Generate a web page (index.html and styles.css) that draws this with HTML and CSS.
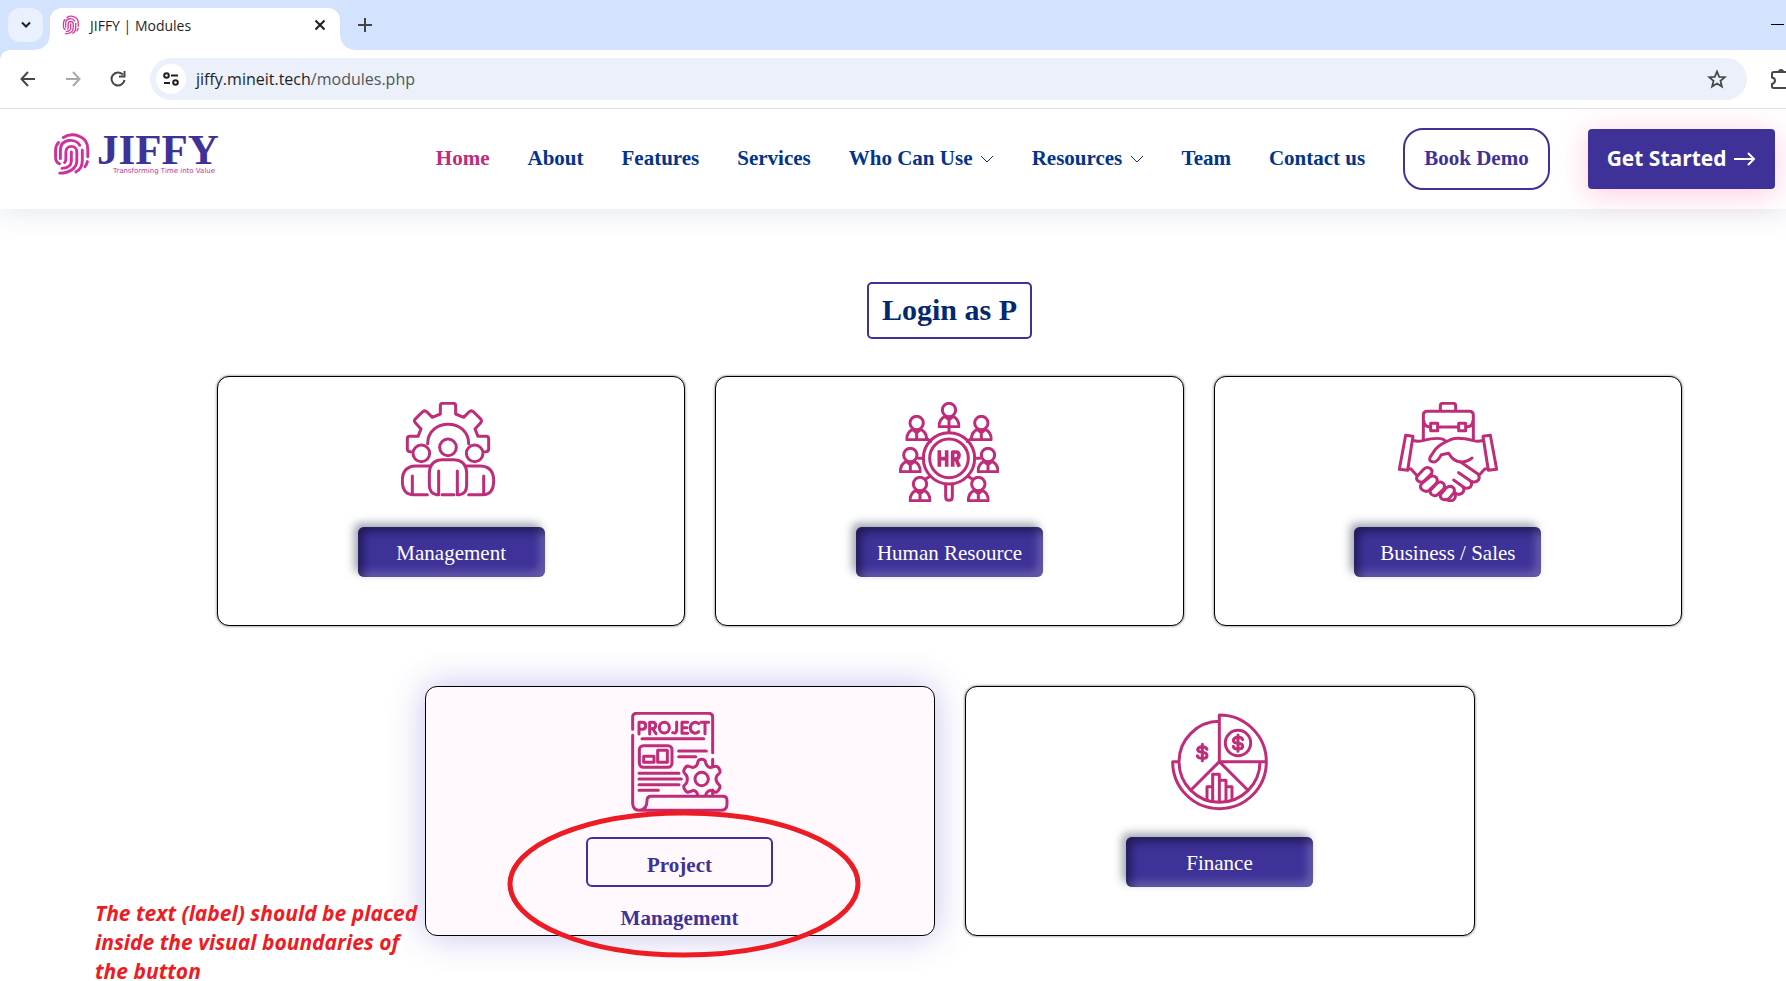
FILE: index.html
```html
<!DOCTYPE html>
<html lang="en">
<head>
<meta charset="utf-8">
<title>JIFFY | Modules</title>
<link rel="stylesheet" href="styles.css">
</head>
<body>
<svg class="defs" aria-hidden="true">
  <symbol id="finger" viewBox="158 394 118 135">
    <g fill="none" stroke="currentColor" stroke-width="9" stroke-linecap="round">
      <path d="M175 426Q166 436 166 450V472Q166 486 178 492"/>
      <path d="M190 410C218 393 266 404 266 446V470"/>
      <path d="M181 476V450C181 412 228 412 241 434"/>
      <path d="M249 450V482Q249 508 229 517"/>
      <path d="M194 488Q198 484 198 476V455C198 432 232 432 232 455V482C232 506 210 521 179 521"/>
      <path d="M215 455V484Q214 504 186 506"/>
      <path d="M265 485Q262 496 257 501"/>
    </g>
  </symbol>
  <symbol id="chev" viewBox="0 0 14 8"><path d="M1 1l6 6 6-6" fill="none" stroke="currentColor" stroke-width="1"/></symbol>
  <symbol id="worker" viewBox="0 0 68 78">
    <g fill="none" stroke="currentColor" stroke-width="9"><circle cx="34" cy="24" r="20"/><path d="M4 74H64C64 56 55 47 45 43M4 74C4 56 13 47 23 43M34 44V74M24 45L34 54 44 45"/></g>
  </symbol>
</svg>
<div class="window">
  <div class="tabstrip">
    <button class="tabsearch" aria-label="Search tabs"><svg width="12" height="8" viewBox="0 0 12 8"><path d="M2 1.500l4 4 4-4" fill="none" stroke="#1f1f1f" stroke-width="2"/></svg></button>
    <div class="tab">
      <svg class="favicon" width="18" height="20"><use href="#finger"/></svg>
      <span class="tabtitle">JIFFY | Modules</span>
      <button class="plain" aria-label="Close tab"><svg width="12" height="12" viewBox="0 0 12 12"><path d="M1.500 1.500l9 9M10.500 1.500l-9 9" stroke="#1f1f1f" stroke-width="2"/></svg></button>
    </div>
    <button class="plain newtab" aria-label="New tab"><svg width="14" height="14" viewBox="0 0 14 14"><path d="M7 0v14M0 7h14" stroke="#444" stroke-width="2"/></svg></button>
    <button class="plain minimise" aria-label="Minimise"><svg width="13" height="2" viewBox="0 0 13 2"><path d="M0 .5h13" stroke="#000"/></svg></button>
  </div>
  <div class="toolbar">
    <button class="plain" aria-label="Back"><svg width="16" height="16" viewBox="0 0 16 16"><path d="M15 8H2M8 1L1.500 8 8 15" fill="none" stroke="#474747" stroke-width="2"/></svg></button>
    <button class="plain" aria-label="Forward"><svg width="16" height="16" viewBox="0 0 16 16"><path d="M1 8h13M8 1l6.500 7L8 15" fill="none" stroke="#a9a9a9" stroke-width="2"/></svg></button>
    <button class="plain" aria-label="Reload"><svg width="16" height="16" viewBox="0 0 16 16"><path d="M14.500 9A6.500 6.500 0 1 1 13 3.700" fill="none" stroke="#474747" stroke-width="2"/><path d="M15.500 0v6.500H9V4.500h4.500V0z" fill="#474747"/></svg></button>
    <div class="omnibox">
      <button class="site" aria-label="Site information"><svg width="16" height="14" viewBox="0 0 16 14" fill="none" stroke="#1f1f1f" stroke-width="2"><circle cx="3.500" cy="3.500" r="2.300"/><path d="M8 3.500h7M1 11h6"/><circle cx="12.500" cy="10.500" r="2.300"/></svg></button>
      <div class="url">jiffy.mineit.tech<span>/modules.php</span></div>
      <button class="plain" aria-label="Bookmark"><svg width="20" height="20" viewBox="0 0 20 20"><path d="M10 2.500l2.200 5.300 5.700.4-4.400 3.700 1.400 5.600L10 14.500l-4.900 3 1.400-5.600L2.100 8.200l5.700-.4z" fill="none" stroke="#474747" stroke-width="1.800"/></svg></button>
    </div>
    <button class="plain ext" aria-label="Extensions"><svg width="15" height="22" viewBox="0 0 15 22"><path d="M15 4H3Q1 4 1 6V9.500Q4 10 4 12.500T1 16V18.500Q1 20 3 20H15" fill="none" stroke="#474747" stroke-width="2"/><path d="M7 4Q7 1 10 1T13 4z" fill="#474747"/></svg></button>
  </div>
  <div class="page">
    <header class="header">
      <a class="logo" href="#">
        <svg width="38" height="44"><use href="#finger"/></svg>
        <span class="wordmark"><span class="name">JIFFY</span><span class="tagline">Transforming Time into Value</span></span>
      </a>
      <nav class="nav">
        <a class="active" href="#">Home</a>
        <a href="#">About</a>
        <a href="#">Features</a>
        <a href="#">Services</a>
        <a href="#">Who Can Use <svg width="14" height="8"><use href="#chev"/></svg></a>
        <a href="#">Resources <svg width="14" height="8"><use href="#chev"/></svg></a>
        <a href="#">Team</a>
        <a href="#">Contact us</a>
        <a class="demo" href="#">Book Demo</a>
        <a class="start" href="#">Get Started <svg width="22" height="14" viewBox="0 0 22 14"><path d="M0 7h20M14 1l6 6-6 6" fill="none" stroke="#fff" stroke-width="2"/></svg></a>
      </nav>
    </header>
    <main class="modules">
      <h1 class="title">Login as P</h1>
      <div class="row three">
        <section class="card">
          <svg class="icon" viewBox="183 96 300 300">
            <path d="M212 245Q202 245 202 236V206Q202 199 210 199H234L243 177 226 158Q221 152 227 146L247 126Q254 119 261 126L277 142 301 132V108Q301 100 309 100H339Q347 100 347 108V132L371 142 387 126Q394 119 401 126L421 146Q427 152 422 158L405 177 414 199H438Q446 199 446 206V236Q446 245 436 245"/>
            <path d="M263 221C263 143 386 143 386 221"/>
            <circle cx="324" cy="232" r="25"/><circle cx="244" cy="250" r="25"/><circle cx="404" cy="250" r="25"/>
            <path d="M295 374H290Q268 370 268 346V308Q270 270 308 269H340Q378 270 380 308V346Q380 372 358 374H353M296 303V374M352 303V374M306 374H342"/>
            <path d="M270 288H226Q187 290 187 332 187 374 220 374H262M378 288H422Q461 290 461 332 461 374 428 374H386M217 318V370M431 318V370"/>
          </svg>
          <a class="btn" href="#">Management</a>
        </section>
        <section class="card">
          <svg class="icon" viewBox="178 96 300 300">
            <use href="#worker" x="294" y="96" width="68" height="78"/>
            <use href="#worker" x="197" y="135" width="68" height="78"/><use href="#worker" x="391" y="135" width="68" height="78"/>
            <use href="#worker" x="178" y="231" width="68" height="78"/><use href="#worker" x="411" y="231" width="68" height="78"/>
            <use href="#worker" x="207" y="318" width="68" height="78"/><use href="#worker" x="382" y="318" width="68" height="78"/>
            <g stroke-width="9"><circle cx="328" cy="265" r="77"/><circle cx="328" cy="265" r="58"/><path d="M328 174V188M262 206L273 215M394 206L383 215M236 265H251M405 265H420M257 328L272 318M399 328L384 318M318 342V380Q318 391 328 391T338 380V342"/></g>
            <path stroke-width="11" stroke-linecap="butt" d="M299 241V290M321 241V290M299 266H321M339 290V246H349Q358 246 358 256T349 267H339M349 267L359 290"/>
          </svg>
          <a class="btn" href="#">Human Resource</a>
        </section>
        <section class="card">
          <svg class="icon" viewBox="204 96 300 300">
            <path d="M331 122V108Q331 100 339 100H369Q377 100 377 108V122M280 208V136Q280 124 292 124H418Q430 124 430 136V208M281 150Q281 170 300 171M324 171H386M429 150Q429 170 410 171"/>
            <rect x="302" y="160" width="21" height="22"/><rect x="386" y="160" width="21" height="22"/>
            <path d="M227 196L249 199 233 301 208 298ZM481 196L459 199 475 301 500 298Z"/>
            <path d="M249 211Q262 216 278 212 334 198 346 213M459 211Q446 216 430 212 384 200 364 208 330 222 318 236 312 244 300 262 296 275 310 276 322 277 334 254L356 250Q370 275 392 276 408 277 426 264"/>
            <path d="M235 296L243 297 262 318M474 296L464 297 446 317M392 276L444 312Q450 320 446 329 436 341 422 333L386 308M422 334Q428 342 421 351 410 359 399 350L371 330M399 351Q406 360 396 370 385 377 374 368M375 372Q379 384 370 390 360 395 348 388"/>
            <path d="M262 318L281 298Q291 288 302 296 310 304 303 313L281 334Q272 340 263 332 257 325 262 318ZM275 341L298 322Q310 314 319 323 325 332 318 341L297 361Q288 368 276 359 267 350 275 341ZM303 359L320 341Q332 331 341 341 346 349 340 358L323 374Q313 381 303 372 298 365 303 359ZM333 372L348 354Q362 344 371 354 376 362 370 370L357 386Q345 393 335 386 328 379 333 372Z"/>
          </svg>
          <a class="btn" href="#">Business / Sales</a>
        </section>
      </div>
      <div class="row two">
        <section class="card hover">
          <svg class="icon" viewBox="211 96 300 300">
            <path d="M219 148V112Q219 100 231 100H447Q459 100 459 112V218M219 166V370Q220 391 240 391 262 388 262 362 262 349 274 349H490Q502 349 502 362V374Q501 391 484 391H240M459 238V260M459 330V346"/>
            <path d="M247 176H432M357 213H440M357 230H408M238 280H358M238 297H365M238 314H358M238 331H296"/>
            <rect x="239" y="197" width="98" height="65" rx="12"/><rect x="252" y="229" width="31" height="18"/><rect x="294" y="211" width="29" height="36"/>
            <circle cx="426" cy="297" r="20"/>
            <path d="M414 346Q413 334 402 331L387 336Q380 338 375 328 369 319 376 314 383 308 383 297T376 281Q369 275 375 266 380 256 388 259L400 263Q413 259 414 248 415 238 426 238T438 248Q440 259 452 263L466 259Q474 257 479 267 484 276 478 281 469 288 469 297T478 314Q484 319 478 328 473 338 465 336L452 331Q440 334 438 346"/>
            <path d="M238 162V127H248Q258 127 258 137T248 148H238M270 162V127H279Q288 127 288 136T279 146H270M279 146L289 161M351 126V151Q351 161 339 158M384 127H367V160H384M367 143H382M417 131Q410 125 402 128 392 132 392 144T403 159Q411 161 417 155M424 127H447M436 127V161"/><ellipse cx="314" cy="143" rx="15" ry="16"/>
          </svg>
          <a class="btn" href="#">Project Management</a>
          <svg class="ring" viewBox="0 0 356 150"><ellipse cx="178" cy="75" rx="174" ry="71" fill="none" stroke="#ed1c24" stroke-width="5"/></svg>
        </section>
        <section class="card">
          <svg class="icon" viewBox="209 66 300 300">
            <path d="M357 94C290 94 236 150 236 215 236 282 290 337 357 337 425 337 479 282 479 215M357 215V75C435 75 498 138 498 215 498 294 435 356 357 356 280 356 217 294 217 215H236M357 215H498M357 215L272 300M357 215L442 300"/>
            <path d="M320 331V290H337M337 334V253H357V334M357 271H377V334M377 290H395V328"/>
            <circle cx="413" cy="159" r="38"/>
            <path d="M427 149Q425 142 413 142T399 150Q399 159 413 160T427 169Q427 177 413 177T399 169M413 135V184M320 178Q318 170 306 170T292 178Q292 186 306 187T320 197Q320 205 306 205T291 197M306 163V212"/>
          </svg>
          <a class="btn" href="#">Finance</a>
        </section>
        <p class="note">The text (label) should be placed inside the visual boundaries of the button</p>
      </div>
    </main>
  </div>
</div>
</body>
</html>
```
FILE: styles.css
```css
* { box-sizing: border-box; }
body { margin: 0; background: #fff; font-family: "Liberation Serif", serif; }
button { font: inherit; color: inherit; cursor: pointer; }
a { text-decoration: none; color: inherit; }
.defs { position: absolute; width: 0; height: 0; }
.window { height: 100vh; display: flex; flex-direction: column; overflow: hidden; background: #d3e2fd; }
.plain { border: 0; background: none; padding: 0; display: flex; align-items: center; }

.tabstrip { display: flex; align-items: flex-start; height: 50px; padding: 8px 2px 0 8px; font-family: "Open Sans", sans-serif; }
.tabsearch { width: 35px; height: 34px; border: 0; border-radius: 12px; background: #e9f0fe; display: flex; align-items: center; justify-content: center; padding: 0; }
.tab { position: relative; margin-left: 7px; width: 290px; height: 42px; padding: 0 14px 8px 12px; background: #fff; border-radius: 12px 12px 0 0; display: flex; align-items: center; font-size: 14px; color: #1f1f1f; }
.tab::before, .tab::after { content: ""; position: absolute; bottom: 0; width: 14px; height: 14px; }
.tab::before { right: 100%; background: radial-gradient(circle at 0 0, transparent 13px, #fff 14px); }
.tab::after { left: 100%; background: radial-gradient(circle at 100% 0, transparent 13px, #fff 14px); }
.favicon { color: #d43fa0; }
.tabtitle { flex: 1; margin-left: 10px; }
.newtab { height: 34px; margin-left: 18px; }
.minimise { height: 34px; margin-left: auto; }

.toolbar { display: flex; align-items: center; gap: 29px; height: 59px; padding: 0 0 0 20px; border-bottom: 1px solid #dfe0e3; border-top-left-radius: 10px; background: #fff; overflow: hidden; }
.omnibox { flex: 1; margin-left: -5px; height: 42px; border-radius: 21px; background: #ebf0fa; display: flex; align-items: center; padding: 0 20px 0 6px; font-family: "Open Sans", sans-serif; font-size: 16px; color: #1f1f1f; }
.site { width: 30px; height: 30px; border: 0; border-radius: 50%; background: #fff; padding: 0; display: flex; align-items: center; justify-content: center; }
.url { flex: 1; margin-left: 10px; }
.url span { color: #50555c; }
.ext { margin-left: -5px; }

.page { flex: 1; min-height: 0; overflow: hidden; background: #fff; }
.header { display: flex; align-items: center; justify-content: space-between; height: 100px; padding: 0 11px 0 53px; background: #fff; box-shadow: 0 0 30px rgba(30, 50, 110, .14); }
.logo { display: flex; gap: 6px; align-items: center; margin-bottom: 10px; color: #d0309c; }
.wordmark { display: flex; flex-direction: column; }
.name { font-weight: bold; font-size: 43px; line-height: 34px; color: #3e3298; }
.tagline { font: 7px/8px "DejaVu Sans", sans-serif; padding-left: 16px; }
.nav { display: flex; align-items: center; gap: 38px; font-weight: bold; font-size: 21px; color: #03348c; white-space: nowrap; }
.nav a { padding-bottom: 2px; }
.nav .active { color: #bf2c78; }
.nav svg { margin-left: 2px; vertical-align: 2px; }
.nav .demo { color: #3e3298; border: 2px solid #3e3298; border-radius: 20px; padding: 0 19px 2px; line-height: 56px; }
.nav .start { font: 700 21px/58px "Open Sans", sans-serif; color: #fff; background: #3e3298; border-radius: 4px; padding: 0 19px 2px; box-shadow: 0 5px 30px rgba(245, 80, 160, .3); }
.nav .start svg { vertical-align: 0; }

.modules { padding: 73px 104px 0 217px; display: flex; flex-direction: column; align-items: center; }
.title { margin: 0 0 37px; padding: 0 13px 2px; border: 2px solid #3e3298; border-radius: 5px; font-size: 30px; line-height: 51px; color: #012970; }
.row { width: 100%; display: flex; justify-content: center; gap: 30px; }
.three .card { flex: 1; }
.two { position: relative; margin-top: 60px; }
.two .card { flex: 0 1 510px; }
.card { position: relative; height: 250px; padding-top: 25px; border: 1px solid #000; border-radius: 12px; background: #fff; box-shadow: 0 0 3px rgba(0, 0, 0, .6); display: flex; flex-direction: column; align-items: center; gap: 25px; }
.hover { background: #fff9fd; box-shadow: 0 0 35px rgba(62, 50, 190, .3); }
.icon { flex: none; width: 100px; height: 100px; color: #bf2c78; fill: none; stroke: currentColor; stroke-width: 9; stroke-linecap: round; stroke-linejoin: round; }
.btn { width: 187px; height: 50px; padding: 0 16px; border-radius: 6px; text-align: center; font-size: 21px; line-height: 53px; color: #fff; background: #3e3298; box-shadow: -4px -4px 8px rgba(70, 80, 100, .5), inset 5px 5px 9px rgba(10, 10, 40, .55), inset -5px -5px 9px rgba(255, 255, 255, .22); }
.hover .btn { background: none; border: 2px solid #3e3298; box-shadow: none; color: #3e3298; font-weight: bold; }
.ring { position: absolute; left: 80px; top: 122px; width: 356px; height: 150px; }
.note { position: absolute; left: -122px; top: 213px; width: 328px; margin: 0; font: italic bold 21px/29px "Open Sans", sans-serif; color: #ed1c24; }
```
